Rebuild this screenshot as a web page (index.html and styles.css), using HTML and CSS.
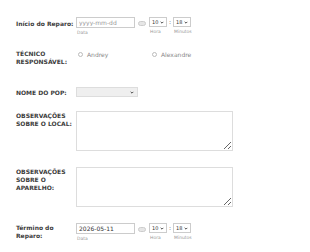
FILE: index.html
```html
<!DOCTYPE html>
<html lang="pt-BR">
<head>
    <meta charset="UTF-8">
    <title>Reparo</title>
    <link rel="stylesheet" href="styles.css">
</head>
<body>
    <form class="form">
        <div class="row row-inicio">
            <label class="lbl">Início do Reparo:</label>
            <div class="dt">
                <div class="group">
                    <input class="date" type="text" placeholder="yyyy-mm-dd">
                    <span class="sub">Data</span>
                </div>
                <span class="cal"></span>
                <div class="group">
                    <span class="sel">10 <svg viewBox="0 0 6 4"><path d="M1 1l2 2 2-2" /></svg></span>
                    <span class="sub">Hora</span>
                </div>
                <span class="colon">:</span>
                <div class="group">
                    <span class="sel">18 <svg viewBox="0 0 6 4"><path d="M1 1l2 2 2-2" /></svg></span>
                    <span class="sub">Minutos</span>
                </div>
            </div>
        </div>

        <div class="row row-tecnico">
            <label class="lbl">TÉCNICO RESPONSÁVEL:</label>
            <div class="radios">
                <label class="opt"><span class="circle"></span>Andrey</label>
                <label class="opt"><span class="circle"></span>Alexandre</label>
            </div>
        </div>

        <div class="row row-pop">
            <label class="lbl">NOME DO POP:</label>
            <span class="pop"><svg viewBox="0 0 6 4"><path d="M1 1l2 2 2-2" /></svg></span>
        </div>

        <div class="row row-local">
            <label class="lbl">OBSERVAÇÕES SOBRE O LOCAL:</label>
            <textarea class="obs"></textarea>
        </div>

        <div class="row row-aparelho">
            <label class="lbl">OBSERVAÇÕES SOBRE O APARELHO:</label>
            <textarea class="obs"></textarea>
        </div>

        <div class="row row-termino">
            <label class="lbl">Término do Reparo:</label>
            <div class="dt">
                <div class="group">
                    <input class="date filled" type="text" value="2026-05-11">
                    <span class="sub">Data</span>
                </div>
                <span class="cal"></span>
                <div class="group">
                    <span class="sel">10 <svg viewBox="0 0 6 4"><path d="M1 1l2 2 2-2" /></svg></span>
                    <span class="sub">Hora</span>
                </div>
                <span class="colon">:</span>
                <div class="group">
                    <span class="sel">18 <svg viewBox="0 0 6 4"><path d="M1 1l2 2 2-2" /></svg></span>
                    <span class="sub">Minutos</span>
                </div>
            </div>
        </div>
    </form>
</body>
</html>
```

FILE: styles.css
```css
body {
    margin: 0;
    background: #fff;
    font-family: "DejaVu Sans", Verdana, sans-serif;
    color: #444;
}

.form {
    padding: 17px 0 0 16px;
}

.row {
    display: flex;
    align-items: flex-start;
}

.lbl {
    width: 60px;
    flex-shrink: 0;
    font-size: 6px;
    font-weight: bold;
    line-height: 8px;
    color: #3c3c3c;
}

.row-inicio .lbl {
    padding-top: 3px;
}

.row-tecnico {
    margin-top: 15px;
}

.row-pop {
    margin-top: 21px;
}

.row-pop .lbl {
    padding-top: 2px;
}

.row-local {
    margin-top: 14px;
}

.row-local .lbl,
.row-aparelho .lbl {
    padding-top: 1px;
}

.row-aparelho {
    margin-top: 16px;
}

.row-termino {
    margin-top: 16px;
}

.row-termino .lbl {
    padding-top: 1px;
}

/* data e hora */
.dt {
    display: flex;
    align-items: flex-start;
}

.group {
    display: flex;
    flex-direction: column;
}

.date {
    box-sizing: border-box;
    width: 59px;
    height: 11px;
    margin: 0;
    padding: 0 2px;
    border: 1px solid #ccc;
    font-family: inherit;
    font-size: 6px;
    color: #333;
    outline: none;
}

.date::placeholder {
    color: #999;
}

.sub {
    font-size: 4.5px;
    color: #999;
    margin-top: 2px;
    padding-left: 1px;
}

.cal {
    width: 6px;
    height: 3px;
    margin: 4px 3px 0;
    border: 1px solid #ccc;
    border-radius: 3px;
    background: #e6e6e6;
}

.sel {
    box-sizing: border-box;
    display: flex;
    align-items: center;
    justify-content: space-between;
    width: 18px;
    height: 10px;
    padding: 0 2px;
    border: 1px solid #ccc;
    font-size: 5px;
    color: #333;
}

.sel svg,
.pop svg {
    width: 4px;
    height: 3px;
    fill: none;
    stroke: #333;
    stroke-width: 1.3;
}

.colon {
    font-size: 6px;
    color: #555;
    width: 6px;
    text-align: center;
    line-height: 10px;
}

/* radios */
.radios {
    display: flex;
    padding-top: 1px;
}

.opt {
    display: flex;
    align-items: center;
    width: 74px;
    font-size: 6px;
    color: #888;
}

.circle {
    box-sizing: border-box;
    width: 5px;
    height: 5px;
    border: 1px solid #bbb;
    border-radius: 50%;
    margin: 0 4px 0 2px;
}

/* pop */
.pop {
    box-sizing: border-box;
    display: flex;
    align-items: center;
    justify-content: flex-end;
    width: 62px;
    height: 10px;
    padding-right: 3px;
    border: 1px solid #ddd;
    background: #efefef;
}

.obs {
    box-sizing: border-box;
    width: 157px;
    height: 40px;
    margin: 0;
    border: 1px solid #ddd;
    resize: both;
}
```
